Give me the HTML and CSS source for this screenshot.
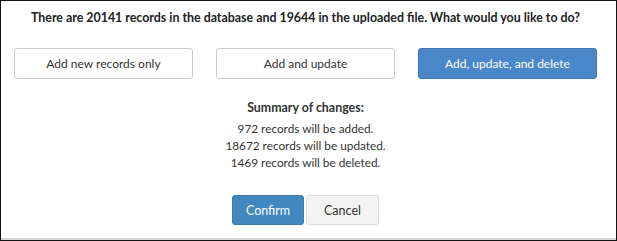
FILE: index.html
```html
<!DOCTYPE html>
<html lang="en">
<head>
    <meta charset="UTF-8">
    <meta name="viewport" content="width=device-width, initial-scale=1.0">
    <title>Import records</title>
    <link rel="stylesheet" href="styles.css">
</head>
<body>
    <div id="dialog">
        <p class="question">There are 20141 records in the database and 19644 in the uploaded file. What would you like to do?</p>

        <div class="choices">
            <button class="choice">Add new records only</button>
            <button class="choice">Add and update</button>
            <button class="choice selected">Add, update, and delete</button>
        </div>

        <div class="summary">
            <h4>Summary of changes:</h4>
            <p>972 records will be added.</p>
            <p>18672 records will be updated.</p>
            <p>1469 records will be deleted.</p>
        </div>

        <div class="actions">
            <button id="confirm-button">Confirm</button>
            <button id="cancel-button">Cancel</button>
        </div>
    </div>
</body>
</html>
```

FILE: styles.css
```css
html, body {
    margin: 0;
    padding: 0;
    background: #fff;
}

body {
    font-family: Lato, "Liberation Sans", sans-serif;
    color: #333;
}

#dialog {
    box-sizing: border-box;
    width: 617px;
    height: 241px;
    border: 1px solid #111;
    box-shadow: inset 0 -2px 0 #d6d6d6;
    padding: 0 19px 0 13px;
    display: flex;
    flex-direction: column;
    align-items: center;
}

.question {
    margin: 9px 0 0;
    font-size: 12.4px;
    line-height: 16px;
    font-weight: bold;
    color: #222;
    text-align: center;
}

.choices {
    align-self: stretch;
    margin-top: 22px;
    display: grid;
    grid-template-columns: repeat(3, 1fr);
    grid-gap: 23px;
}

.choice {
    height: 31px;
    background-color: #fff;
    border: 1px solid #ccc;
    border-radius: 3px;
    font-family: inherit;
    font-size: 12px;
    color: #333;
    cursor: pointer;
}

.choice.selected {
    background-color: #4a87c8;
    border-color: #4079b5;
    color: #fff;
}

.summary {
    margin-top: 20px;
    text-align: center;
    font-size: 11.8px;
    line-height: 17px;
}

.summary h4 {
    margin: 0 0 4px;
    font-size: 12.4px;
    font-weight: bold;
}

.summary p {
    margin: 0;
}

.actions {
    margin-top: 24px;
    display: flex;
    gap: 2px;
}

.actions button {
    height: 30px;
    border-radius: 3px;
    font-family: inherit;
    font-size: 12.5px;
    cursor: pointer;
}

#confirm-button {
    width: 72px;
    background-color: #4188bf;
    border: 1px solid #3a7aad;
    color: #fff;
}

#cancel-button {
    width: 73px;
    background-color: #f3f3f3;
    border: 1px solid #dcdcdc;
    color: #333;
}
```
